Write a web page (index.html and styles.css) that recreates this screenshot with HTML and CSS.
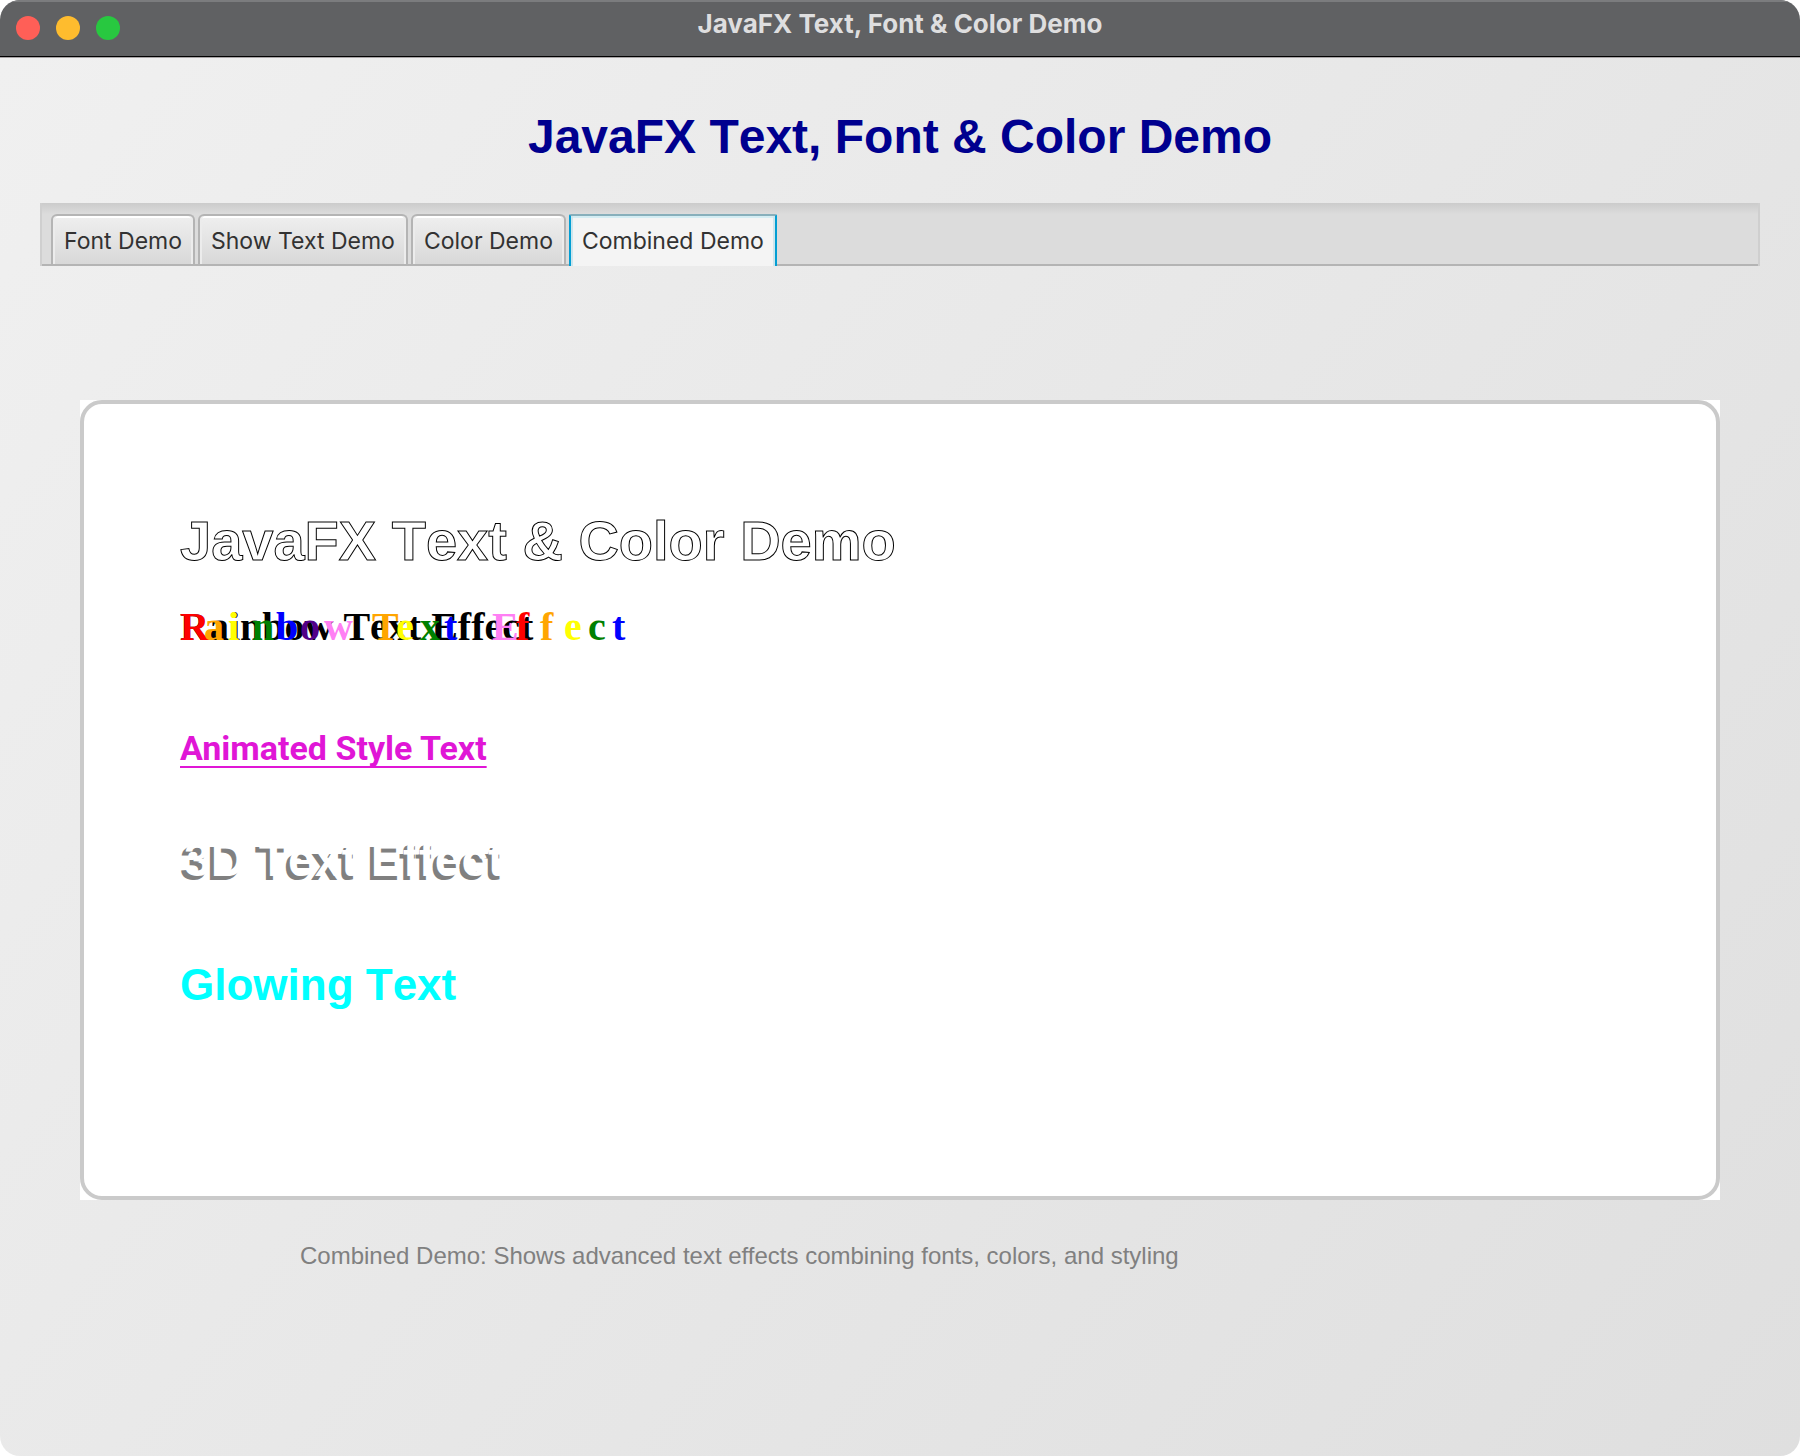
FILE: index.html
```html
<!DOCTYPE html>
<html lang="en">
<head>
<meta charset="utf-8">
<title>JavaFX Text, Font &amp; Color Demo</title>
<link rel="stylesheet" href="styles.css">
</head>
<body>
<div class="window">
  <header class="titlebar">
    <div class="controls">
      <button class="control close" type="button" aria-label="Close"></button>
      <button class="control minimize" type="button" aria-label="Minimize"></button>
      <button class="control zoom" type="button" aria-label="Zoom"></button>
    </div>
    <div class="window-title">JavaFX Text, Font &amp; Color Demo</div>
  </header>
  <main class="content">
    <h1 class="page-title">JavaFX Text, Font &amp; Color Demo</h1>
    <div class="tabs" role="tablist">
      <button class="tab" type="button" role="tab" aria-selected="false">Font Demo</button>
      <button class="tab" type="button" role="tab" aria-selected="false">Show Text Demo</button>
      <button class="tab" type="button" role="tab" aria-selected="false">Color Demo</button>
      <button class="tab selected" type="button" role="tab" aria-selected="true">Combined Demo</button>
    </div>
    <section class="panel" role="tabpanel">
      <div class="canvas">
        <div class="canvas-frame">
          <h2 class="outlined">JavaFX Text &amp; Color Demo</h2>
          <div class="rainbow">
            <span class="rainbow-base">Rainbow Text Effect</span>
            <span class="rainbow-letters" aria-hidden="true"><i class="red">R</i><i class="orange">a</i><i class="yellow">i</i><i class="green">n</i><i class="blue">b</i><i class="indigo">o</i><i class="violet">w</i><i></i><i class="orange">T</i><i class="yellow">e</i><i class="green">x</i><i class="blue">t</i><i></i><i class="violet">E</i><i class="red">f</i><i class="orange">f</i><i class="yellow">e</i><i class="green">c</i><i class="blue">t</i></span>
          </div>
          <p class="animated">Animated Style Text</p>
          <p class="raised">3D Text Effect</p>
          <p class="glowing">Glowing Text</p>
        </div>
      </div>
      <p class="caption">Combined Demo: Shows advanced text effects combining fonts, colors, and styling</p>
    </section>
  </main>
</div>
</body>
</html>
```
FILE: styles.css
```css
* {
  box-sizing: border-box;
}

body {
  margin: 0;
  background: #fff;
  font-family: "Liberation Sans", Arial, sans-serif;
}

h1, h2, p {
  margin: 0;
}

.window {
  display: flex;
  flex-direction: column;
  min-height: 100vh;
  overflow: hidden;
  border-radius: 20px;
}

/* Title bar */
.titlebar {
  display: grid;
  grid-template-columns: 1fr auto 1fr;
  height: 57px;
  padding: 0 16px;
  background: #606163;
  border-top: 2px solid #7b7c7e;
  border-bottom: 1px solid #000;
}

.controls {
  display: flex;
  gap: 16px;
  padding-top: 14px;
}

.control {
  width: 24px;
  height: 24px;
  padding: 0;
  border: 0;
  border-radius: 50%;
}

.close { background: #ff5f57; }
.minimize { background: #febc2e; }
.zoom { background: #28c840; }

.window-title {
  padding-top: 6px;
  color: #dededf;
  font: 700 26px/32px Inter, sans-serif;
}

/* Content */
.content {
  flex: 1;
  padding: 51px 40px 0;
  background: linear-gradient(128deg, #f0f0f0, #dfdfdf);
  border-top: 1px solid #a8a4a6;
}

.page-title {
  margin-bottom: 38px;
  color: #00008f;
  font-size: 48px;
  line-height: 56px;
  font-kerning: none;
  text-align: center;
}

.tabs {
  display: flex;
  gap: 3px;
  height: 63px;
  padding: 11px 9px 0;
  background: linear-gradient(#cbcbcb, #dcdcdc 11px);
  border: solid #cfcfcf;
  border-width: 0 2px;
  box-shadow: inset 0 -2px #b4b4b4;
}

.tab {
  margin-bottom: 2px;
  padding: 2px 11px 0;
  color: #323232;
  font: 400 23px/32px Inter, sans-serif;
  background: linear-gradient(#efefef, #d8d8d8);
  border: 2px solid #b4b4b4;
  border-bottom: 0;
  border-radius: 6px 6px 0 0;
  box-shadow: inset 2px 0 #ececec, inset -2px 0 #ececec, inset 0 2px #fff;
}

.tab.selected {
  margin-bottom: 0;
  padding-bottom: 2px;
  background: #f4f4f4;
  border-color: #87afbb #039ed3 #f4f4f4;
  border-radius: 2px 2px 0 0;
  box-shadow: inset 2px 0 #cde6ed, inset -2px 0 #cde6ed, inset 0 2px #d4edf3;
}

.panel {
  padding: 134px 40px 40px;
}

.canvas {
  background: #fff;
}

.canvas-frame {
  padding: 105px 96px 185px;
  border: 4px solid #cacaca;
  border-radius: 22px;
}

.outlined {
  color: #fff;
  font-size: 56px;
  line-height: 64px;
  font-kerning: none;
  -webkit-text-stroke: 1px #000;
}

.rainbow {
  display: grid;
  margin-top: 30px;
  font: 700 40px/48px "Liberation Serif", "Times New Roman", serif;
  font-kerning: none;
}

.rainbow-base,
.rainbow-letters {
  grid-area: 1 / 1;
}

.rainbow-letters {
  display: grid;
  grid-template-columns: repeat(19, 24px);
}

.rainbow-letters i {
  font-style: normal;
}

.red { color: #ff0000; }
.orange { color: #ffa500; }
.yellow { color: #ffff00; }
.green { color: #008000; }
.blue { color: #0000ff; }
.indigo { color: #520088; }
.violet { color: #ff7ff4; }

.animated {
  margin-top: 77px;
  color: #e016d6;
  font: 700 34px/40px Roboto, sans-serif;
  text-decoration: underline 2px;
  text-underline-offset: 6px;
  text-decoration-skip-ink: none;
}

.raised {
  margin-top: 64px;
  padding-left: 4px;
  color: #fff;
  font-size: 48px;
  font-weight: 700;
  line-height: 56px;
  font-kerning: none;
  text-shadow: -4px 4px 0 #808080;
}

.glowing {
  margin-top: 71px;
  color: #00ffff;
  font-size: 44px;
  font-weight: 700;
  line-height: 52px;
  font-kerning: none;
}

.caption {
  margin: 42px 0 0 220px;
  color: #808080;
  font-size: 24px;
  line-height: 28px;
}
```
